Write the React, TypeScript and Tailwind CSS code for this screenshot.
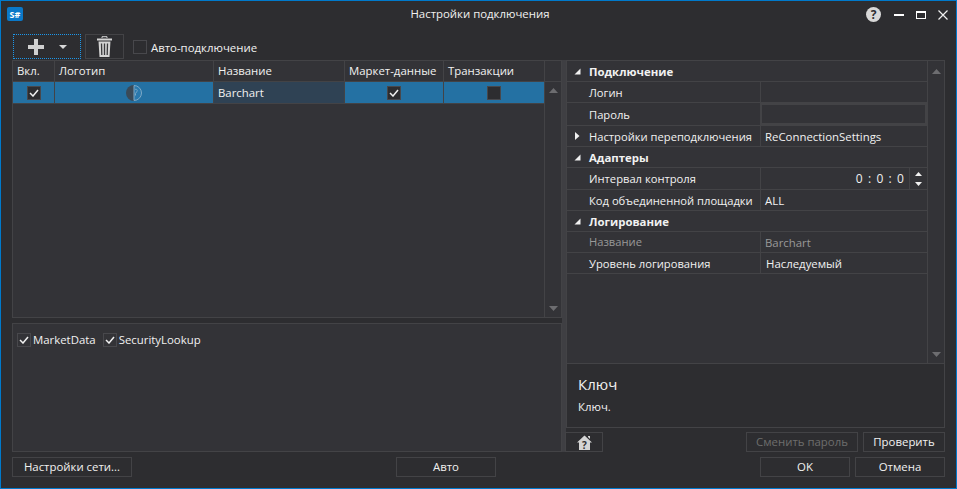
const font = "font-['Open_Sans','Liberation_Sans',sans-serif]";

function Box({ checked, fill, className = "" }: { checked?: boolean; fill?: boolean; className?: string }) {
  return (
    <span className={`flex h-[14px] w-[14px] shrink-0 items-center justify-center border border-[#48484c] ${fill ? "bg-[#2d2d30]" : ""} ${className}`}>
      {checked && (
        <svg width="10" height="8" viewBox="0 0 10 8">
          <path d="M1 4l3 3 5-6" fill="none" stroke="#f1f1f1" strokeWidth="1.5" />
        </svg>
      )}
    </span>
  );
}

function HeadCell({ w, children }: { w: string; children?: React.ReactNode }) {
  return <div className={`${w} flex h-full shrink-0 items-center whitespace-nowrap border-r border-[#434346] pl-[4px]`}>{children}</div>;
}

function Row({ label, value, dim, h = "h-[21px]", input, shift = "pt-px", labelPt = "pt-[2px]" }: { label: string; value?: React.ReactNode; dim?: boolean; h?: string; input?: boolean; shift?: string; labelPt?: string }) {
  return (
    <div className={`flex ${h} items-center whitespace-nowrap border-b border-[#434346] ${dim ? "text-[#999]" : ""}`}>
      <div className={`w-[193px] shrink-0 pl-[22px] text-[11.2px] ${labelPt}`}>{label}</div>
      <div className={`flex h-full flex-1 items-center pl-[4px] ${shift} ${input ? "border-2 border-[#434346]" : "border-l border-[#434346]"}`}>{value}</div>
    </div>
  );
}

function Group({ label }: { label: string }) {
  return (
    <div className="flex h-[21px] items-center border-b border-[#434346] font-bold">
      <svg width="7" height="7" viewBox="0 0 7 7" className="ml-[7px] mr-[8px] shrink-0"><path d="M6.500 0.500v6h-6z" fill="#f1f1f1" /></svg>
      <span className="pt-px">{label}</span>
    </div>
  );
}

function Btn({ w, children, dim }: { w: string; children: React.ReactNode; dim?: boolean }) {
  return (
    <button className={`${w} flex h-[20px] items-center justify-center border border-[#434346] ${dim ? "text-[#6d6d6d]" : ""}`}>
      {children}
    </button>
  );
}

function Arrows({ top }: { top: string }) {
  return (
    <div className={`flex w-[17px] shrink-0 flex-col items-center justify-between border-l border-[#434346] pb-[6px] ${top}`}>
      <svg width="9" height="5" viewBox="0 0 9 5"><path d="M4.500 0L9 5H0z" fill="#6d6d70" /></svg>
      <svg width="9" height="5" viewBox="0 0 9 5"><path d="M0 0h9L4.500 5z" fill="#6d6d70" /></svg>
    </div>
  );
}

export default function App() {
  return (
    <div className={`${font} flex h-[489px] w-[957px] flex-col overflow-hidden border border-[#007acc] bg-[#2d2d30] text-[11.4px] text-[#f1f1f1]`}>
      {/* title bar */}
      <div className="flex h-[33px] shrink-0 items-start">
        <div className="flex h-[26px] w-[90px] items-center">
          <div className="ml-[6px] flex h-[14px] w-[16px] items-center justify-center rounded-[2px] bg-[#0a78c8] text-[9px] font-bold leading-none text-white">S#</div>
        </div>
        <div className="flex h-[26px] flex-1 items-center justify-center pl-[3px] text-[11.4px]">Настройки подключения</div>
        <div className="mr-[8px] flex h-[27px] w-[82px] items-center">
          <span className="flex h-[15px] w-[15px] items-center justify-center rounded-full bg-[#d8d8d8] text-[12px] font-bold leading-none text-[#2d2d30]">?</span>
          <span className="ml-[13px] h-[2px] w-[10px] bg-white" />
          <span className="ml-[12px] h-[8px] w-[10px] border border-t-2 border-white" />
          <svg width="10" height="10" viewBox="0 0 10 10" className="ml-[12px]"><path d="M0.500 0.500l9 9M9.500 0.500l-9 9" stroke="#f1f1f1" strokeWidth="1.2" /></svg>
        </div>
      </div>

      {/* toolbar */}
      <div className="ml-[12px] flex h-[26px] shrink-0 items-start">
        <div className="flex h-[25px] w-[68px] items-center border border-dotted border-[#1c97ea]">
          <svg width="16" height="16" viewBox="0 0 16 16" className="ml-[14px]"><path d="M6 0h4v6h6v4h-6v6H6v-6H0V6h6z" fill="#d0d0d0" /></svg>
          <svg width="8" height="4" viewBox="0 0 8 4" className="ml-[15px]"><path d="M0 0h8L4 4z" fill="#d8d8d8" /></svg>
        </div>
        <div className="ml-[4px] flex h-[25px] w-[39px] items-center justify-center border border-[#434346]">
          <svg width="15" height="21" viewBox="0 0 15 21">
            <path d="M5 2V0.700h5V2" fill="none" stroke="#d4d4d4" strokeWidth="1" />
            <path d="M0 2.500h15v2H0z" fill="#d4d4d4" />
            <path d="M1.500 5.500h12l-1 15.500h-10z" fill="#d4d4d4" />
            <path d="M4.500 7.500l.3 11.500M7.500 7.500v11.500M10.500 7.500l-.3 11.500" stroke="#3a3a3d" strokeWidth="1.300" />
          </svg>
        </div>
        <Box className="ml-[9px] mt-[6px]" />
        <span className="ml-[4px] mt-[6px] whitespace-nowrap leading-[15px]">Авто-подключение</span>
      </div>

      {/* body */}
      <div className="ml-[11px] mr-[11px] flex min-h-0 flex-1">
        <div className="flex w-[550px] shrink-0 flex-col">
          <div className="flex min-h-0 flex-1 flex-col border border-[#434346] bg-[#333337]">
            <div className="flex h-[21px] shrink-0 border-b border-[#434346]">
              <HeadCell w="w-[42px]">Вкл.</HeadCell>
              <HeadCell w="w-[159px]">Логотип</HeadCell>
              <HeadCell w="w-[131px]">Название</HeadCell>
              <HeadCell w="w-[99px]">Маркет-данные</HeadCell>
              <HeadCell w="w-[101px]">Транзакции</HeadCell>
            </div>
            <div className="flex min-h-0 flex-1">
              <div className="flex-1">
                <div className="flex h-[22px] border-b border-[#434346]">
                  <div className="flex w-[42px] items-center justify-center border-r border-[#434346] bg-[#2471a3]"><Box checked fill /></div>
                  <div className="flex w-[159px] items-center justify-center border-r border-[#434346] bg-[#2471a3]">
                    <svg width="16" height="16" viewBox="0 0 16 16">
                      <path d="M8 0a8 8 0 0 0 0 16z" fill="#3a4a58" />
                      <path d="M8 .5a7.500 7.500 0 0 1 0 15z" fill="#2a79ad" stroke="#7fa9c6" />
                      <path d="M9 4.500c2-1 3 1 1.500 2.500L9.500 8.500v2" fill="none" stroke="#7fa9c6" />
                    </svg>
                  </div>
                  <div className="flex w-[131px] items-center border-r border-[#434346] bg-[#2f4254] pl-[4px]">Barchart</div>
                  <div className="flex w-[99px] items-center justify-center border-r border-[#434346] bg-[#2471a3]"><Box checked fill /></div>
                  <div className="flex flex-1 items-center justify-center bg-[#2471a3]"><Box fill /></div>
                </div>
              </div>
              <Arrows top="pt-[6px]" />
            </div>
          </div>
          <div className="mt-[5px] flex h-[129px] shrink-0 items-start gap-[7px] border border-[#434346] bg-[#333337] pl-[4px] pt-[8px]">
            <div className="flex items-center gap-[2px]"><Box checked /><span className="-mt-px">MarketData</span></div>
            <div className="flex items-center gap-[2px]"><Box checked /><span className="-mt-px">SecurityLookup</span></div>
          </div>
        </div>

        <div className="w-[4px] shrink-0 bg-[#3f3f43]" />

        <div className="flex min-w-0 flex-1 flex-col">
          <div className="flex min-h-0 flex-1 border border-[#434346] bg-[#333337]">
            <div className="min-w-0 flex-1">
              <Group label="Подключение" />
              <Row label="Логин" shift="" />
              <Row label="Пароль" h="h-[23px]" input />
              <div className="flex h-[21px] items-center whitespace-nowrap border-b border-[#434346]">
                <svg width="5" height="8" viewBox="0 0 5 8" className="ml-[8px] mr-[9px] shrink-0"><path d="M0 0l4.500 4L0 8z" fill="#f1f1f1" /></svg>
                <span className="w-[171px] shrink-0 pt-[2px] text-[11.2px]">Настройки переподключения</span>
                <span className="flex h-full flex-1 items-center border-l border-[#434346] pl-[4px] pt-px">ReConnectionSettings</span>
              </div>
              <Group label="Адаптеры" />
              <Row label="Интервал контроля" h="h-[22px]" shift="" value={
                <div className="flex h-full w-full items-center justify-end">
                  <span className="mr-[4px] text-[12px] tracking-[1.1px]">0 : 0 : 0</span>
                  <span className="flex h-full w-[18px] flex-col items-center justify-center gap-[6px] border-l border-[#434346]">
                    <svg width="7" height="4" viewBox="0 0 7 4"><path d="M3.500 0L7 4H0z" fill="#f1f1f1" /></svg>
                    <svg width="7" height="4" viewBox="0 0 7 4"><path d="M0 0h7L3.500 4z" fill="#f1f1f1" /></svg>
                  </span>
                </div>
              } />
              <Row label="Код объединенной площадки" value="ALL" />
              <Group label="Логирование" />
              <Row label="Название" value="Barchart" dim labelPt="pt-px" />
              <Row label="Уровень логирования" value={<span className="pl-[1px]">Наследуемый</span>} />
            </div>
            <Arrows top="pt-[8px]" />
          </div>
          <div className="h-[64px] shrink-0 border-x border-b border-[#434346] pl-[11px] pt-[10px]">
            <div className="text-[15px] leading-[20px]">Ключ</div>
            <div className="mt-[5px] leading-[16px]">Ключ.</div>
          </div>
          <div className="mt-[4px] flex h-[20px] shrink-0">
            <button className="-ml-px flex h-[20px] w-[38px] items-center justify-center border border-[#434346]">
              <svg width="15" height="15" viewBox="0 0 15 15"><path d="M7.500 0.500L15 7.500h-2V15H2V7.500H0zM11 1h2v3l-2-2z" fill="#d4d4d4" /><text x="7.500" y="13.500" textAnchor="middle" fontSize="10" fontWeight="700" fill="#2d2d30">?</text></svg>
            </button>
            <div className="flex-1" />
            <Btn w="w-[112px] mr-[5px]" dim>Сменить пароль</Btn>
            <Btn w="w-[82px]">Проверить</Btn>
          </div>
        </div>
      </div>

      {/* footer */}
      <div className="ml-[11px] mr-[11px] mb-[11px] mt-[5px] flex h-[20px] shrink-0">
        <Btn w="w-[120px]">Настройки сети...</Btn>
        <Btn w="w-[100px] ml-[264px]">Авто</Btn>
        <div className="flex-1" />
        <Btn w="w-[90px] mr-[5px]">OK</Btn>
        <Btn w="w-[90px]">Отмена</Btn>
      </div>
    </div>
  );
}
